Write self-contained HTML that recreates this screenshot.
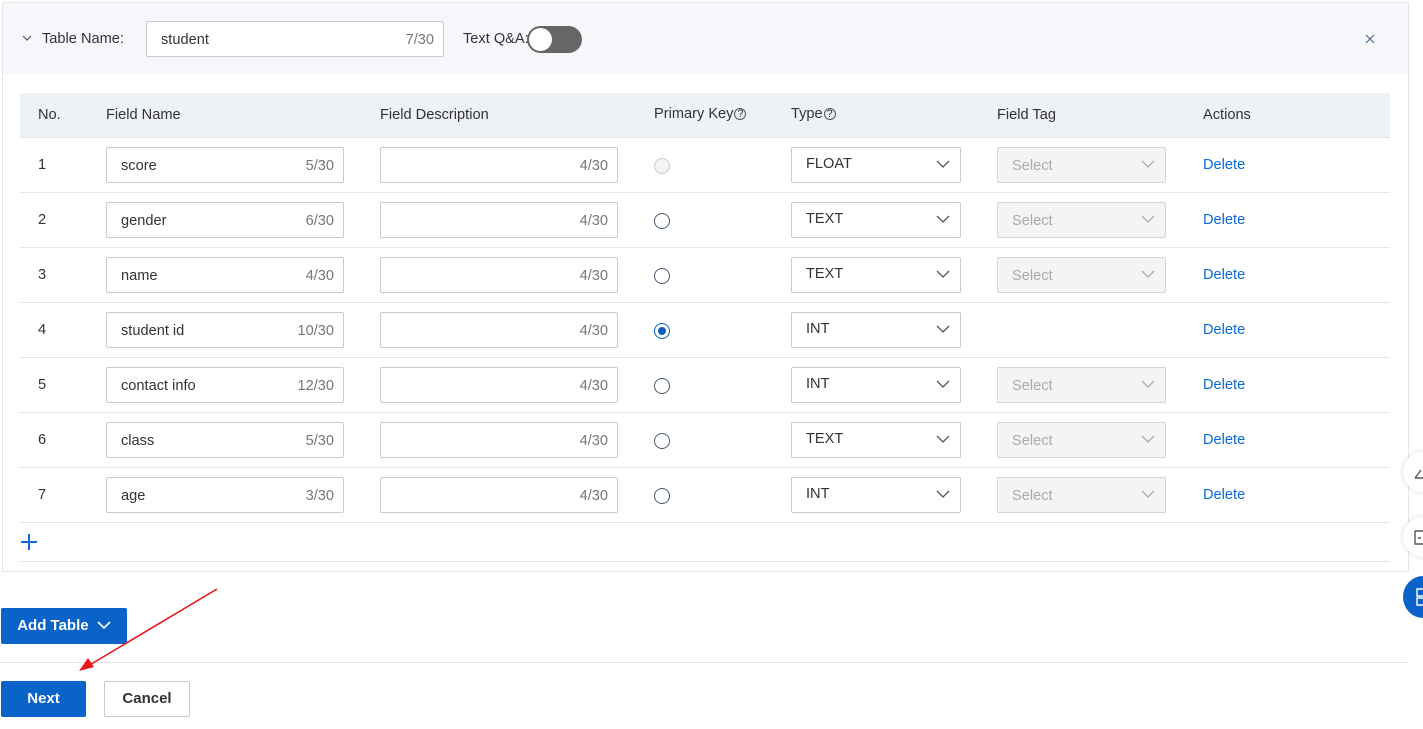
<!DOCTYPE html>
<html><head><meta charset="utf-8"><style>
*{box-sizing:border-box;margin:0;padding:0}
body{width:1423px;height:729px;overflow:hidden;background:#fff;font-family:"Liberation Sans",Arial,sans-serif;font-size:14.6px;color:#333;position:relative}
.abs{position:absolute}
.card{left:2px;top:2px;width:1407px;height:570px;border:1px solid #e3e5e8;border-radius:2px}
.hdr{left:3px;top:3px;width:1405px;height:71px;background:#f5f7fa}
.inp{position:absolute;height:36px;border:1px solid #c8ccd2;background:#fff;border-radius:2px}
.inp .v{position:absolute;left:14px;top:10px;color:#333}
.inp .c{position:absolute;right:9px;top:10px;color:#777}
.sel{position:absolute;height:36px;border:1px solid #c8ccd2;background:#fff;border-radius:2px}
.sel .v{position:absolute;left:14px;top:8px}
.sel.dis{background:#f3f4f6;border-color:#d3d6da}
.sel.dis .v{color:#aaa;top:10px}
.sel svg{position:absolute;right:10px;top:11px}
.th{position:absolute;top:107px;color:#333}
.line{position:absolute;left:20px;width:1370px;height:1px;background:#e3e5e8}
.radio{position:absolute;width:16px;height:16px;border:1px solid #4a5a70;border-radius:50%;background:#fff}
.del{position:absolute;color:#0a6bd6}
.btn{position:absolute;height:36px;border-radius:2px;font-weight:bold;font-size:15px;text-align:center;line-height:36px}
</style></head><body>
<div class="abs card"></div>
<div class="abs hdr"></div>
<svg class="abs" style="left:22px;top:34px" width="10" height="8"><path d="M1 2l4 4 4-4" stroke="#555" fill="none" stroke-width="1.2"/></svg>
<div class="abs" style="left:42px;top:31px">Table Name:</div>
<div class="inp" style="left:146px;top:21px;width:298px;height:36px"><span class="v">student</span><span class="c">7/30</span></div>
<div class="abs" style="left:463px;top:31px">Text Q&amp;A:</div>
<div class="abs" style="left:527px;top:26px;width:55px;height:27px;border-radius:14px;background:#666"></div>
<div class="abs" style="left:529px;top:28px;width:23px;height:23px;border-radius:50%;background:#fff"></div>
<svg class="abs" style="left:1365px;top:34px" width="10" height="10"><path d="M1 1l8 8M9 1l-8 8" stroke="#4a6a90" stroke-width="1.2"/></svg>

<div class="abs" style="left:20px;top:93px;width:1370px;height:44px;background:#eef1f6"></div>
<div class="line" style="top:137px"></div>
<div class="th" style="left:38px">No.</div>
<div class="th" style="left:106px">Field Name</div>
<div class="th" style="left:380px">Field Description</div>
<div class="th" style="left:654px;top:106px">Primary Key<span style="font-size:11px;border:1px solid #555;border-radius:50%;display:inline-block;width:12px;height:12px;line-height:10px;text-align:center;vertical-align:1px;margin-left:1px">?</span></div>
<div class="th" style="left:791px;top:106px">Type<span style="font-size:11px;border:1px solid #555;border-radius:50%;display:inline-block;width:12px;height:12px;line-height:10px;text-align:center;vertical-align:1px;margin-left:1px">?</span></div>
<div class="th" style="left:997px">Field Tag</div>
<div class="th" style="left:1203px">Actions</div>

<div id="rows"></div>
<script>
var d=[["score","5/30","FLOAT",1,0],["gender","6/30","TEXT",1,1],["name","4/30","TEXT",1,1],["student id","10/30","INT",0,2],["contact info","12/30","INT",1,1],["class","5/30","TEXT",1,1],["age","3/30","INT",1,1]];
var h="";
d.forEach(function(r,i){var y=138+i*55;
h+='<div class="abs" style="left:38px;top:'+(y+19)+'px">'+(i+1)+'</div>';
h+='<div class="inp" style="left:106px;top:'+(y+9)+'px;width:238px"><span class="v">'+r[0]+'</span><span class="c">'+r[1]+'</span></div>';
h+='<div class="inp" style="left:380px;top:'+(y+9)+'px;width:238px"><span class="c">4/30</span></div>';
if(r[4]==0)h+='<div class="radio" style="left:654px;top:'+(y+20)+'px;border-color:#ccc;background:#f3f3f3"></div>';
else if(r[4]==2)h+='<div class="radio" style="left:654px;top:'+(y+20)+'px;border-color:#0a5fc2"><div style="position:absolute;left:3px;top:3px;width:8px;height:8px;border-radius:50%;background:#0a5fc2"></div></div>';
else h+='<div class="radio" style="left:654px;top:'+(y+20)+'px"></div>';
var ch='<svg width="14" height="10"><path d="M1 2l6 6 6-6" stroke="#555" fill="none" stroke-width="1.3"/></svg>';
h+='<div class="sel" style="left:791px;top:'+(y+9)+'px;width:170px"><span class="v">'+r[2]+'</span>'+ch+'</div>';
if(r[3])h+='<div class="sel dis" style="left:997px;top:'+(y+9)+'px;width:169px"><span class="v">Select</span>'+ch.replace('#555','#aaa')+'</div>';
h+='<div class="del" style="left:1203px;top:'+(y+19)+'px">Delete</div>';
h+='<div class="line" style="top:'+(y+54)+'px"></div>';
});
document.getElementById('rows').innerHTML=h;
</script>
<svg class="abs" style="left:20px;top:533px" width="18" height="18"><path d="M9 1v16M1 9h16" stroke="#0a6bd6" stroke-width="2"/></svg>
<div class="line" style="top:561px"></div>

<div class="btn" style="left:1px;top:608px;width:126px;background:#0a63c9;color:#fff">Add Table <svg width="14" height="10" style="margin-left:4px"><path d="M1 2l6 6 6-6" stroke="#fff" fill="none" stroke-width="1.6"/></svg></div>
<div class="abs" style="left:0;top:662px;width:1409px;height:1px;background:#e3e5e8"></div>
<div class="btn" style="left:1px;top:681px;width:85px;background:#0a63c9;color:#fff">Next</div>
<div class="btn" style="left:104px;top:681px;width:86px;border:1px solid #c8ccd2;color:#333;line-height:34px">Cancel</div>
<svg class="abs" style="left:0;top:0" width="1423" height="729"><path d="M217 589L88 666" stroke="#e8161b" stroke-width="1.6"/><path d="M79 671l9-13 6 9z" fill="#e8161b"/></svg>

<div class="abs" style="left:1403px;top:452px;width:40px;height:40px;border-radius:50%;background:#fff;box-shadow:0 0 6px rgba(0,0,0,.15)"></div>
<svg class="abs" style="left:1414px;top:464px" width="9" height="16"><path d="M1 14h8M1 14l6-8" stroke="#555" fill="none" stroke-width="1.4"/></svg>
<div class="abs" style="left:1403px;top:517px;width:40px;height:40px;border-radius:50%;background:#fff;box-shadow:0 0 6px rgba(0,0,0,.15)"></div>
<svg class="abs" style="left:1414px;top:530px" width="9" height="16"><path d="M1 1h8M1 1v13h8M4 8h3" stroke="#555" fill="none" stroke-width="1.4"/></svg>
<div class="abs" style="left:1403px;top:576px;width:40px;height:42px;border-radius:50%;background:#0a63c9"></div>
<svg class="abs" style="left:1416px;top:588px" width="7" height="18"><path d="M1 1h7v7H1zM1 10h7v7H1z" stroke="#fff" fill="none" stroke-width="1.4"/></svg>
</body></html>
